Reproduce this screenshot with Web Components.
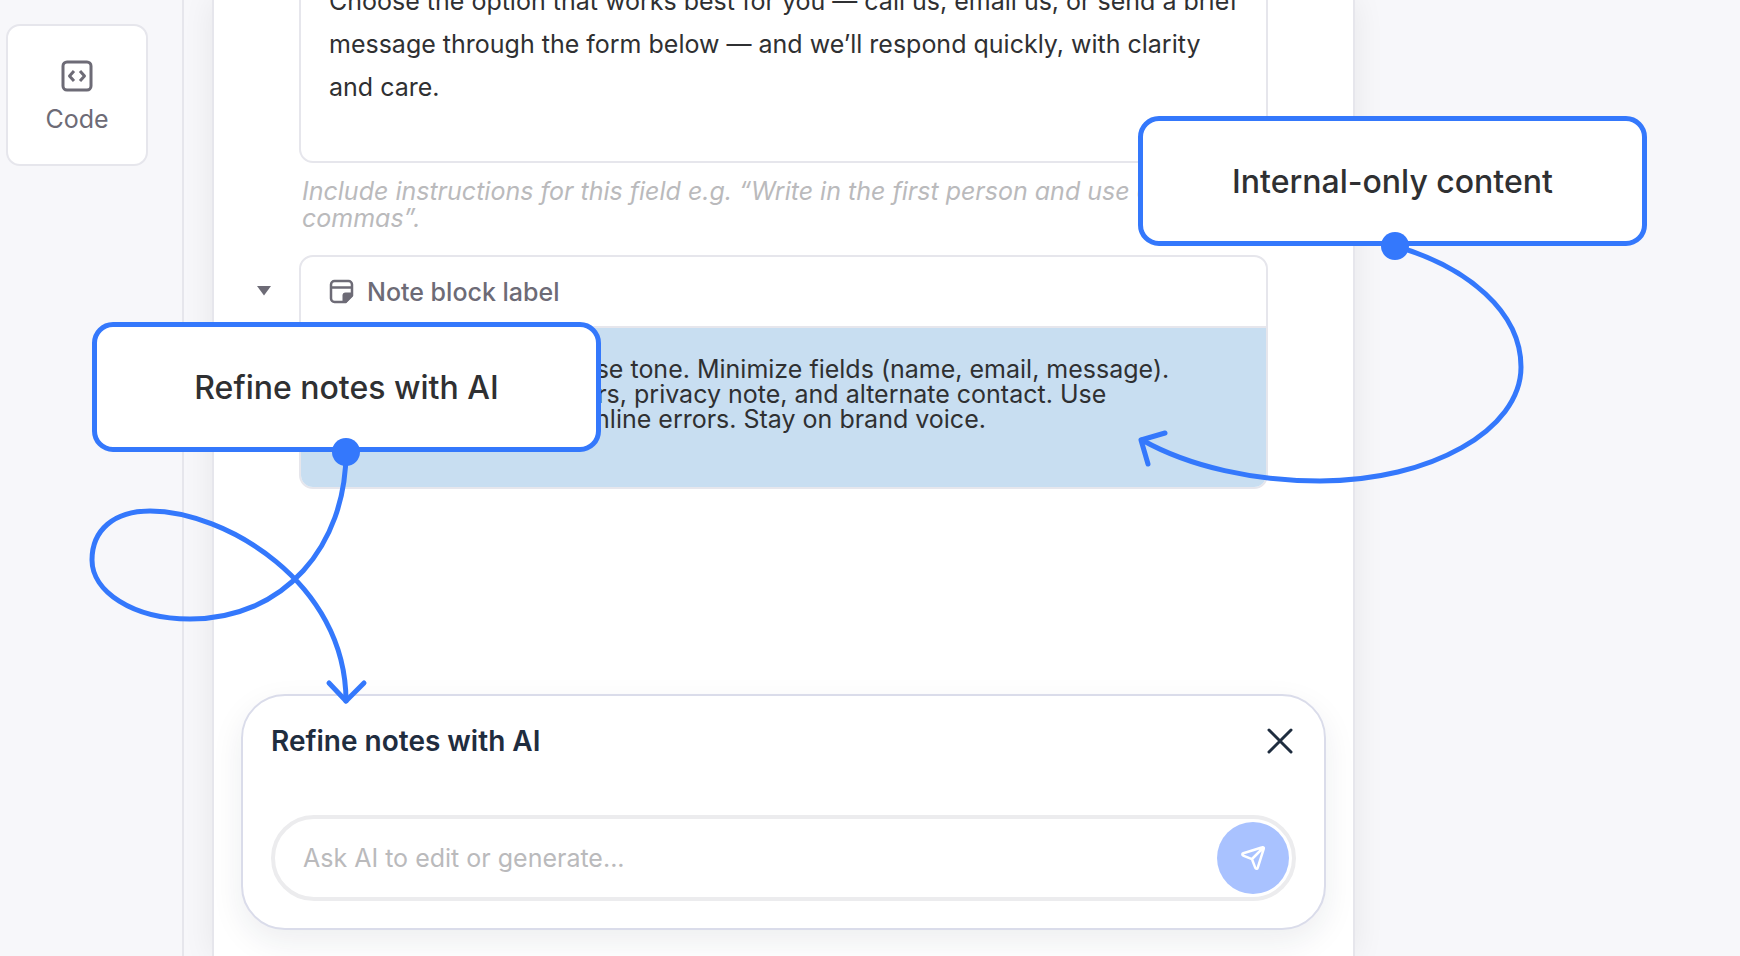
<!DOCTYPE html>
<html lang="en">
<head>
<meta charset="utf-8">
<meta name="viewport" content="width=device-width, initial-scale=1">
<title>Note editor</title>
<style>
:root {
  --blue: #3478fc;
  --ink: #2f3032;
  --muted: #6d6b76;
  --faint: #bababc;
  --line: #e6e6ec;
  --text: 25px;
}
body {
  margin: 0;
  overflow: hidden;
  background: #f7f7fa;
  font-family: Inter, "Liberation Sans", sans-serif;
  font-size: var(--text);
  font-optical-sizing: none;
  color: var(--ink);
}
</style>
</head>
<body>
<note-app></note-app>

<script>
// note editor: block rail, document sheet, AI prompt and the tour callouts

function define(name, html, setup) {
  const template = document.createElement('template');
  template.innerHTML = html;
  customElements.define(name, class extends HTMLElement {
    constructor() {
      super();
      this.attachShadow({ mode: 'open' });
      this.shadowRoot.appendChild(template.content.cloneNode(true));
    }
    connectedCallback() {
      if (setup) setup(this, this.shadowRoot);
    }
  });
}

// ── Block tile in the left rail ─────────────────────────────────────────────
define('block-tile', `
<style>
:host { display: block; }
button {
  display: flex;
  flex-direction: column;
  align-items: center;
  justify-content: center;
  gap: 12px;
  width: 100%;
  aspect-ratio: 1;
  padding: 3px 0 0;
  border: 2px solid var(--line);
  border-radius: 14px;
  background: #fff;
  color: var(--muted);
  font: inherit;
  line-height: 30px;
}
svg { display: block; width: 32px; height: 32px; }
</style>
<button type="button">
  <svg viewBox="0 0 32 32" fill="none" stroke="currentColor" stroke-width="3" stroke-linecap="round" stroke-linejoin="round">
    <rect x="2" y="2" width="28" height="28" rx="4"/>
    <path d="M13 11 8.500 16l4.500 5M19 11l4.500 5-4.500 5" stroke-linecap="butt"/>
  </svg>
  <slot></slot>
</button>
`);

define('block-rail', `
<style>
:host {
  display: block;
  box-sizing: border-box;
  flex: 0 0 184px;
  padding: 24px 34px 24px 6px;
  border-right: 2px solid var(--line);
  background: #f7f7fa;
  z-index: 1;
}
</style>
<slot></slot>
`);

// ── Text field with its instructions line ───────────────────────────────────
define('text-field', `
<style>
:host { display: block; }
textarea {
  display: block;
  box-sizing: border-box;
  width: 100%;
  margin: 0;
  border: 0;
  resize: none;
  overflow: hidden;
  background: none;
  color: inherit;
  font: inherit;
}
.value {
  height: 216px;
  padding: 31px 20px 52px 28px;
  border: 2px solid var(--line);
  border-radius: 14px;
  line-height: 43px;
}
.hint {
  height: 54px;
  margin-top: 15px;
  padding: 0 3px;
  font-style: italic;
  line-height: 27px;
}
.hint::placeholder { color: var(--faint); opacity: 1; }
</style>
<textarea class="value" aria-label="Message"></textarea>
<textarea class="hint" aria-label="Field instructions"></textarea>
`, (host, root) => {
  root.querySelector('.value').value = host.getAttribute('value');
  root.querySelector('.hint').placeholder = host.getAttribute('hint');
});

// ── Collapsible note block ──────────────────────────────────────────────────
define('note-block', `
<style>
:host { display: flex; }
.toggle {
  flex: none;
  width: 85px;
  height: 60px;
  margin-left: -85px;
  padding: 11px 0 0 42px;
  border: 0;
  background: none;
  color: var(--muted);
}
.toggle svg { display: block; width: 16px; height: 10px; }
.card {
  flex: 1;
  overflow: hidden;
  border: 2px solid var(--line);
  border-radius: 14px;
  background: #fff;
}
header {
  display: flex;
  align-items: center;
  gap: 13px;
  height: 69px;
  padding: 0 28px;
  border-bottom: 2px solid var(--line);
  color: var(--muted);
  font-weight: 500;
  line-height: 30px;
}
header svg { display: block; width: 25px; height: 25px; }
.body {
  padding: 29px 28px 55px;
  background: #c8def1;
  line-height: 25px;
  white-space: nowrap;
}
</style>
<button class="toggle" type="button" aria-label="Collapse block">
  <svg viewBox="0 0 16 10"><path d="M1 0h14L8 9.500Z" fill="currentColor"/></svg>
</button>
<section class="card">
  <header>
    <svg viewBox="0 0 25 25" fill="none" stroke="currentColor" stroke-width="2.500" stroke-linejoin="round">
      <path d="M5.500 2h14A3.500 3.500 0 0 1 23 5.500v11L16.500 23h-11A3.500 3.500 0 0 1 2 19.500v-14A3.500 3.500 0 0 1 5.500 2ZM2 8.500h21"/>
      <path d="M13.500 24v-7.500a3 3 0 0 1 3-3H24v3L17 24Z" fill="currentColor" stroke="none"/>
    </svg>
    <slot name="label"></slot>
  </header>
  <div class="body"><slot></slot></div>
</section>
`);

// ── AI prompt docked at the foot of the sheet ───────────────────────────────
define('ai-prompt', `
<style>
:host {
  display: flex;
  flex-direction: column;
  gap: 55px;
  padding: 26px 28px 27px;
  border: 2px solid #dadcea;
  border-radius: 44px;
  background: #fff;
  box-shadow: 0 12px 32px rgba(30, 34, 60, .08);
}
header {
  display: flex;
  align-items: center;
  justify-content: space-between;
  height: 38px;
  color: #1f2d3f;
}
h2 { margin: 0; font-size: 28px; font-weight: 600; line-height: 32px; }
button { border: 0; padding: 0; background: none; color: inherit; }
.close { margin-right: 2px; }
.close svg { display: block; width: 28px; height: 28px; }
form {
  display: flex;
  align-items: center;
  height: 78px;
  padding: 0 3px 0 28px;
  border: 4px solid #ececee;
  border-radius: 43px;
}
input {
  flex: 1;
  min-width: 0;
  padding: 0;
  border: 0;
  outline: 0;
  background: none;
  font: inherit;
  color: inherit;
}
input::placeholder { color: var(--faint); opacity: 1; }
.send {
  display: grid;
  place-items: center;
  width: 72px;
  height: 72px;
  border-radius: 50%;
  background: #a9c2ff;
  color: #fff;
}
.send svg { display: block; width: 26px; height: 26px; }
</style>
<header>
  <h2><slot></slot></h2>
  <button class="close" type="button" aria-label="Close">
    <svg viewBox="0 0 28 28" fill="none" stroke="currentColor" stroke-width="3" stroke-linecap="round">
      <path d="M3 3l22 22M25 3 3 25"/>
    </svg>
  </button>
</header>
<form>
  <input type="text" aria-label="Ask AI" placeholder="Ask AI to edit or generate...">
  <button class="send" type="button" aria-label="Send">
    <svg viewBox="0 0 26 26" fill="none" stroke="currentColor" stroke-width="2.500" stroke-linecap="round" stroke-linejoin="round">
      <path d="M22.500 2.300 3.300 8.200c-1.300.4-1.300 1.900-.1 2.400l8.800 3.600 3.300 8.700c.5 1.300 2 1.200 2.400-.1L23.800 3.700c.3-.9-.4-1.700-1.300-1.400ZM12 14 23 3"/>
    </svg>
  </button>
</form>
`);

define('doc-sheet', `
<style>
:host {
  display: flex;
  flex-direction: column;
  flex: 1;
  min-width: 0;
  margin: 0 385px 0 28px;
  border: solid var(--line);
  border-width: 0 2px;
  background: #fff;
  box-shadow: 0 0 30px rgba(0, 0, 0, .07);
}
.blocks {
  display: flex;
  flex-direction: column;
  gap: 23px;
  margin-top: -53px;
  padding: 0 85px;
}
.dock { margin-top: auto; padding: 27px 27px 26px; }
</style>
<div class="blocks"><slot></slot></div>
<div class="dock"><slot name="dock"></slot></div>
`);

// ── Tour callouts: boxes and arrows laid over the page ──────────────────────
define('tour-callout', `
<style>
:host {
  position: absolute;
  display: grid;
  place-items: center;
  box-sizing: border-box;
  width: 509px;
  height: 130px;
  border: 5px solid var(--blue);
  border-radius: 21px;
  background: #fff;
  font-size: 32px;
  font-weight: 500;
}
</style>
<slot></slot>
`);

define('tour-layer', `
<style>
:host { position: absolute; inset: 0; z-index: 2; pointer-events: none; }
svg { position: absolute; left: 0; top: 0; width: 1740px; height: 956px; }
::slotted(.refine) { left: 92px; top: 322px; }
::slotted(.internal) { left: 1138px; top: 116px; }
</style>
<slot></slot>
<svg viewBox="0 0 1740 956" fill="none" stroke="var(--blue)" stroke-width="5" stroke-linecap="round" stroke-linejoin="round">
  <path d="M346 452C346 546 284 619 190 619C132 619 92 591 92 560C92 530 114 511 150 511C224 511 346 582 346 701"/>
  <path d="M329 683 346 701 364 683"/>
  <path d="M1395 246C1468 267 1521 312 1521 367C1521 430 1430 481 1320 481C1255 481 1190 467 1142 440"/>
  <path d="M1165 433 1141 440 1148 464"/>
  <g fill="var(--blue)" stroke="none">
    <circle cx="346" cy="452" r="14"/>
    <circle cx="1395" cy="246" r="14"/>
  </g>
</svg>
`);

define('note-app', `
<style>
:host { position: relative; display: flex; height: 100vh; overflow: hidden; }
</style>
<block-rail><block-tile>Code</block-tile></block-rail>
<doc-sheet>
  <text-field
    value="Choose the option that works best for you — call us, email us, or send a brief message through the form below — and we’ll respond quickly, with clarity and care."
    hint="Include instructions for this field e.g. “Write in the first person and use oxford commas”."></text-field>
  <note-block>
    <span slot="label">Note block label</span>
    Adopt a friendly, concise tone. Minimize fields (name, email, message).<br>
    Mention our office hours, privacy note, and alternate contact. Use<br>
    accessible labels and inline errors. Stay on brand voice.
  </note-block>
  <ai-prompt slot="dock">Refine notes with AI</ai-prompt>
</doc-sheet>
<tour-layer>
  <tour-callout class="refine">Refine notes with AI</tour-callout>
  <tour-callout class="internal">Internal-only content</tour-callout>
</tour-layer>
`);
</script>
</body>
</html>
